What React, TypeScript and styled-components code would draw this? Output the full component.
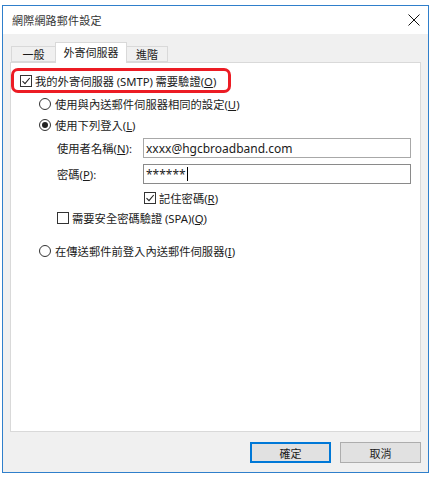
import React from "react";
import styled, { createGlobalStyle } from "styled-components";

const GlobalStyle = createGlobalStyle`
  body {
    margin: 0;
    background: #ffffff;
    font-family: "Noto Sans CJK TC", "Noto Sans", sans-serif;
  }
`;

const Window = styled.div`
  margin: 5px 0 0 2px;
  width: 427px;
  height: 468px;
  box-sizing: border-box;
  border: 1px solid #2f7fcb;
  background: #f0f0f0;
  display: flex;
  flex-direction: column;
  font-size: 11.3px;
  color: #1b1b1b;
`;

const TitleBar = styled.div`
  height: 28px;
  background: #ffffff;
  display: flex;
  align-items: center;
  justify-content: space-between;
  padding: 0 8px 0 9px;
  flex-shrink: 0;
`;

const Title = styled.span`
  font-size: 11px;
  color: #333;
  letter-spacing: 0.2px;
`;

const Body = styled.div`
  flex: 1;
  display: flex;
  flex-direction: column;
  padding: 8px 7px 0 7px;
`;

const TabStrip = styled.div`
  display: flex;
  align-items: flex-end;
  height: 20px;
  padding-left: 1px;
  position: relative;
  z-index: 1;
`;

const Tab = styled.div<{ $active?: boolean; $w: number }>`
  width: ${({ $w }) => $w}px;
  box-sizing: border-box;
  height: ${({ $active }) => ($active ? 21 : 16)}px;
  margin-bottom: ${({ $active }) => ($active ? -1 : 0)}px;
  display: flex;
  align-items: center;
  justify-content: center;
  border: 1px solid #d9d9d9;
  border-bottom: ${({ $active }) => ($active ? "none" : "1px solid #d9d9d9")};
  background: ${({ $active }) => ($active ? "#ffffff" : "#f0f0f0")};
  padding-bottom: ${({ $active }) => ($active ? 2 : 0)}px;
  font-size: 11px;
  & + & {
    margin-left: -1px;
  }
`;

const Panel = styled.div`
  height: 370px;
  box-sizing: border-box;
  background: #ffffff;
  border: 1px solid #d9d9d9;
  display: flex;
  flex-direction: column;
`;

const Highlight = styled.div`
  margin-top: 5px;
  width: 220px;
  height: 25px;
  box-sizing: border-box;
  border: 3px solid #ec1c24;
  border-radius: 7px;
  display: flex;
  align-items: center;
  padding-left: 6px;
`;

const Row = styled.div<{ $top: number; $indent: number }>`
  display: flex;
  align-items: center;
  height: 20px;
  margin-top: ${({ $top }) => $top}px;
  padding-left: ${({ $indent }) => $indent}px;
`;

const Option = styled.label`
  display: flex;
  align-items: center;
  gap: 3px;
  white-space: nowrap;
`;

const Text = styled.span`
  white-space: nowrap;
`;

const Radio = styled.span<{ $checked?: boolean }>`
  width: 12px;
  height: 12px;
  box-sizing: border-box;
  border: 1px solid #333;
  border-radius: 50%;
  display: flex;
  align-items: center;
  justify-content: center;
  margin-right: 1px;
  &::after {
    content: "";
    display: ${({ $checked }) => ($checked ? "block" : "none")};
    width: 6px;
    height: 6px;
    border-radius: 50%;
    background: #222;
  }
`;

const Box = styled.span`
  width: 12px;
  height: 12px;
  box-sizing: border-box;
  border: 1px solid #333;
  display: flex;
  align-items: center;
  justify-content: center;
  background: #fff;
`;

const Field = styled.div`
  width: 86px;
  flex-shrink: 0;
  white-space: nowrap;
`;

const Input = styled.div<{ $focused?: boolean }>`
  width: 268px;
  height: 20px;
  box-sizing: border-box;
  border: 1px solid ${({ $focused }) => ($focused ? "#8a8a8a" : "#a8a8a8")};
  display: flex;
  align-items: center;
  padding-left: 2px;
  font-family: "Noto Sans", "Open Sans", sans-serif;
  font-size: 12px;
  color: #1b1b1b;
`;

const Caret = styled.span`
  display: inline-block;
  width: 1px;
  height: 14px;
  background: #000;
  margin-left: 1px;
`;

const Latin = styled.span`
  font-family: "Noto Sans", sans-serif;
`;

const Footer = styled.div`
  display: flex;
  justify-content: flex-end;
  gap: 9px;
  padding-top: 10px;
`;

const Button = styled.button<{ $primary?: boolean }>`
  width: 81px;
  height: 21px;
  box-sizing: border-box;
  background: #e1e1e1;
  border: ${({ $primary }) => ($primary ? "2px solid #0078d7" : "1px solid #adadad")};
  font-family: "Noto Sans CJK TC", sans-serif;
  font-size: 11px;
  color: #1b1b1b;
  padding: 0;
`;

const Check = () => (
  <svg width="10" height="10" viewBox="0 0 10 10">
    <path d="M1.5 5.2 L4 7.6 L8.7 2" fill="none" stroke="#222" strokeWidth="1.1" />
  </svg>
);

const Close = () => (
  <svg width="12" height="12" viewBox="0 0 12 12">
    <path d="M0.5 0.5 L11.5 11.5 M11.5 0.5 L0.5 11.5" stroke="#111" strokeWidth="1" />
  </svg>
);

const Key = ({ k }: { k: string }) => (
  <Latin>
    (<u>{k}</u>)
  </Latin>
);

export default function App() {
  return (
    <>
      <GlobalStyle />
      <Window>
        <TitleBar>
          <Title>網際網路郵件設定</Title>
          <Close />
        </TitleBar>
        <Body>
          <TabStrip>
            <Tab $w={45}>一般</Tab>
            <Tab $w={72} $active>外寄伺服器</Tab>
            <Tab $w={42}>進階</Tab>
          </TabStrip>
          <Panel>
            <Highlight>
              <Option>
                <Box>
                  <Check />
                </Box>
                <Text>
                  我的外寄伺服器 <Latin>(SMTP)</Latin> 需要驗證<Key k="O" />
                </Text>
              </Option>
            </Highlight>
            <Row $top={1} $indent={28}>
              <Option>
                <Radio />
                <Text>
                  使用與內送郵件伺服器相同的設定<Key k="U" />
                </Text>
              </Option>
            </Row>
            <Row $top={1} $indent={28}>
              <Option>
                <Radio $checked />
                <Text>
                  使用下列登入<Key k="L" />
                </Text>
              </Option>
            </Row>
            <Row $top={3} $indent={46}>
              <Field>
                使用者名稱<Key k="N" />
                <Latin>:</Latin>
              </Field>
              <Input>xxxx@hgcbroadband.com</Input>
            </Row>
            <Row $top={6} $indent={46}>
              <Field>
                密碼<Key k="P" />
                <Latin>:</Latin>
              </Field>
              <Input $focused>
                ******
                <Caret />
              </Input>
            </Row>
            <Row $top={4} $indent={133}>
              <Option>
                <Box>
                  <Check />
                </Box>
                <Text>
                  記住密碼<Key k="R" />
                </Text>
              </Option>
            </Row>
            <Row $top={0} $indent={46}>
              <Option>
                <Box />
                <Text>
                  需要安全密碼驗證 <Latin>(SPA)</Latin>
                  <Key k="Q" />
                </Text>
              </Option>
            </Row>
            <Row $top={13} $indent={28}>
              <Option>
                <Radio />
                <Text>
                  在傳送郵件前登入內送郵件伺服器<Key k="I" />
                </Text>
              </Option>
            </Row>
          </Panel>
          <Footer>
            <Button $primary>確定</Button>
            <Button>取消</Button>
          </Footer>
        </Body>
      </Window>
    </>
  );
}
